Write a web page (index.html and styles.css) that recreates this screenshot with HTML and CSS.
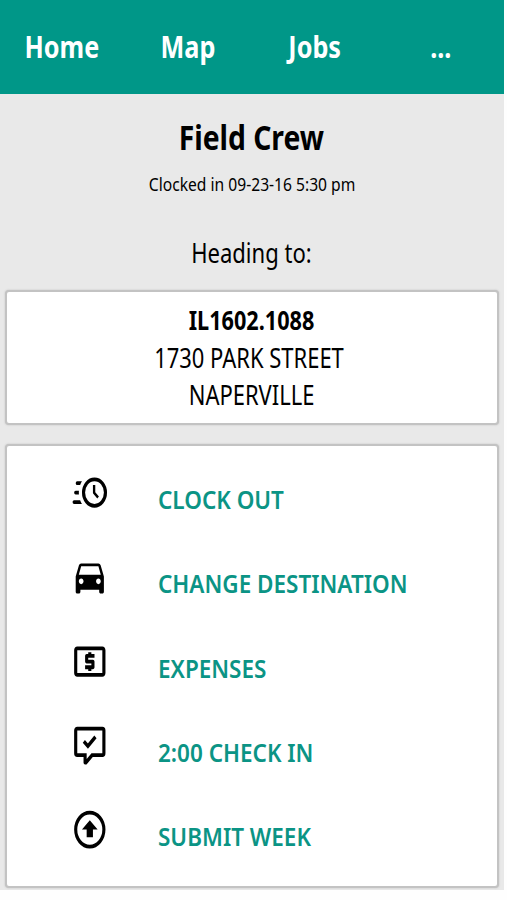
FILE: index.html
```html
<!DOCTYPE html>
<html lang="en">
<head>
<meta charset="utf-8">
<title>Field Crew</title>
<link rel="stylesheet" href="styles.css">
</head>
<body>
<div class="app">
  <nav class="nav">
    <a class="nav-item"><span class="t">Home</span></a>
    <a class="nav-item"><span class="t">Map</span></a>
    <a class="nav-item"><span class="t">Jobs</span></a>
    <a class="nav-item"><span class="t">...</span></a>
  </nav>
  <header class="intro">
    <h1 class="title"><span class="t">Field Crew</span></h1>
    <p class="clocked"><span class="t">Clocked in 09-23-16 5:30 pm</span></p>
    <p class="heading"><span class="t">Heading to:</span></p>
  </header>
  <section class="card destination">
    <p class="line job"><span class="t">IL1602.1088</span></p>
    <p class="line street"><span class="t">1730 PARK STREET</span></p>
    <p class="line"><span class="t">NAPERVILLE</span></p>
  </section>
  <section class="card menu">
    <a class="row">
      <svg class="icon" viewBox="0 0 24 24" preserveAspectRatio="none"><path d="M15 4A8 8 0 0 1 23 12A8 8 0 0 1 15 20A8 8 0 0 1 7 12A8 8 0 0 1 15 4M15 6A6 6 0 0 0 9 12A6 6 0 0 0 15 18A6 6 0 0 0 21 12A6 6 0 0 0 15 6M14 8H15.5V11.78L17.83 14.11L16.77 15.17L14 12.4V8M2 18A1 1 0 0 1 1 17A1 1 0 0 1 2 16H5.83C6.14 16.71 6.54 17.38 7 18H2M3 13A1 1 0 0 1 2 12A1 1 0 0 1 3 11H5.05L5 12L5.05 13H3M4 8A1 1 0 0 1 3 7A1 1 0 0 1 4 6H7C6.54 6.62 6.14 7.29 5.83 8H4Z"/></svg>
      <span class="t">CLOCK OUT</span>
    </a>
    <a class="row">
      <svg class="icon" viewBox="0 0 24 24" preserveAspectRatio="none"><path d="M18.92 6.01C18.72 5.42 18.16 5 17.5 5h-11c-.66 0-1.21.42-1.42 1.01L3 12v8c0 .55.45 1 1 1h1c.55 0 1-.45 1-1v-1h12v1c0 .55.45 1 1 1h1c.55 0 1-.45 1-1v-8l-2.08-5.99zM6.5 16c-.83 0-1.5-.67-1.5-1.5S5.67 13 6.5 13s1.5.67 1.5 1.5S7.33 16 6.5 16zm11 0c-.83 0-1.5-.67-1.5-1.5s.67-1.5 1.5-1.5 1.5.67 1.5 1.5-.67 1.5-1.5 1.5zM5 11l1.5-4.5h11L19 11H5z"/></svg>
      <span class="t">CHANGE DESTINATION</span>
    </a>
    <a class="row">
      <svg class="icon" viewBox="0 0 24 24" preserveAspectRatio="none"><path d="M11 17h2v-1h1c.55 0 1-.45 1-1v-3c0-.55-.45-1-1-1h-3v-1h4V8h-2V7h-2v1h-1c-.55 0-1 .45-1 1v3c0 .55.45 1 1 1h3v1H9v2h2v1zm9-13H4c-1.11 0-1.99.89-1.99 2L2 18c0 1.11.89 2 2 2h16c1.11 0 2-.89 2-2V6c0-1.11-.89-2-2-2zm0 14H4V6h16v12z"/></svg>
      <span class="t">EXPENSES</span>
    </a>
    <a class="row">
      <svg class="icon" viewBox="0 0 24 24" preserveAspectRatio="none"><path d="M9 22A1 1 0 0 1 8 21V18H4A2 2 0 0 1 2 16V4C2 2.89 2.9 2 4 2H20A2 2 0 0 1 22 4V16A2 2 0 0 1 20 18H13.9L10.2 21.71C10 21.9 9.75 22 9.5 22H9M10 16V19.08L13.08 16H20V4H4V16H10Z"/><path class="check" d="M8.2 9.8L10.8 12.3L15.6 7.4"/></svg>
      <span class="t">2:00 CHECK IN</span>
    </a>
    <a class="row">
      <svg class="icon" viewBox="0 0 24 24" preserveAspectRatio="none"><circle class="ring" cx="12" cy="12" r="9"/><path d="M12 7l5 5h-3v4h-4v-4H7z"/></svg>
      <span class="t">SUBMIT WEEK</span>
    </a>
  </section>
</div>
</body>
</html>
```
FILE: styles.css
```css
* { box-sizing: border-box; }

body {
  margin: 0;
  background: #fefefe;
  color: #000;
  font-family: "Noto Sans", sans-serif;
}

h1, p { margin: 0; }

.app {
  width: 503.5px;
  height: 890px;
  background: #e9e9e9;
}

/* Condensed lettering */
.t {
  display: inline-block;
  white-space: nowrap;
  transform: scaleX(0.832);
}

.nav {
  display: grid;
  grid-template-columns: repeat(4, 126.4px);
  height: 93.5px;
  padding-top: 1px;
  align-items: center;
  background: #009788;
  color: #fff;
  font-size: 30.3px;
  font-weight: 700;
  line-height: 40px;
  text-align: center;
}

.nav-item {
  display: flex;
  justify-content: center;
  padding-right: 3px;
}

.intro {
  height: 196.5px;
  padding-top: 23px;
  text-align: center;
}

.title {
  font-size: 34px;
  font-weight: 700;
  line-height: 40px;
}

.clocked {
  margin-top: 12px;
  font-size: 18.8px;
  line-height: 30px;
}

.heading {
  margin-top: 33px;
  font-size: 26.5px;
  line-height: 42px;
}

.card {
  width: 493.5px;
  margin-left: 5px;
  border: 2px solid #c3c3c3;
  border-radius: 4px;
  background: #fff;
  box-shadow: 0 0 2px #bdbdbd;
}

.destination {
  height: 135px;
  padding-top: 9.5px;
  text-align: center;
}

.line {
  font-size: 26.4px;
  line-height: 37.4px;
}

.job {
  margin-bottom: 1px;
  font-size: 26px;
  font-weight: 700;
}

.street { padding-right: 5px; }

.menu {
  height: 444px;
  margin-top: 19px;
  padding: 11px 0 0 64px;
}

.row {
  display: flex;
  align-items: center;
  height: 84.3px;
  color: #0b9485;
  font-size: 26px;
  font-weight: 600;
}

.row .t {
  transform: scaleX(0.865);
  transform-origin: left center;
}

.icon {
  flex: none;
  width: 37.6px;
  height: 45.2px;
  margin: 0 49.2px 13px 0;
  fill: #000;
}

.check, .ring {
  fill: none;
  stroke: #000;
  stroke-width: 2;
}
```
